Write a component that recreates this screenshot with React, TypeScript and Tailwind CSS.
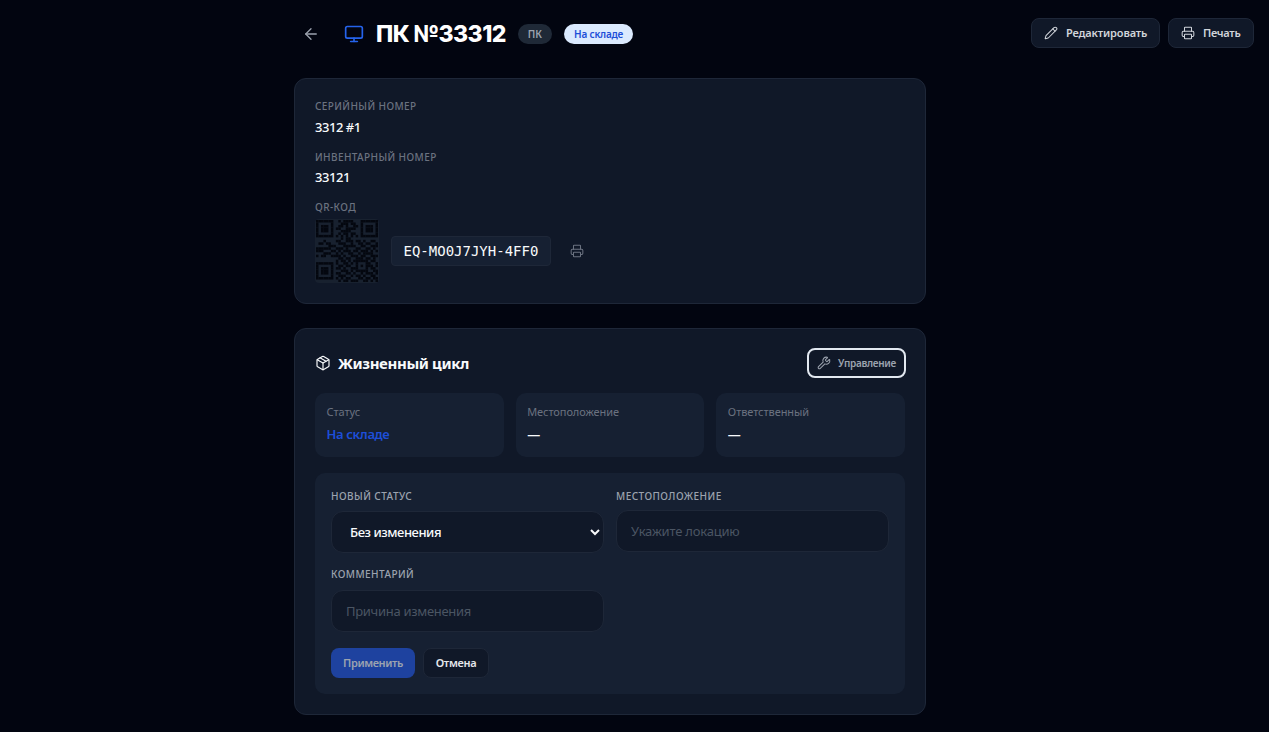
import { ArrowLeft, Monitor, Pencil, Printer, Package, Wrench } from "lucide-react";

const sans = "font-['Noto_Sans',sans-serif]";

const qrRows = [
  "1111111001011110001111111",
  "1000001000111011001000001",
  "1011101001101001101011101",
  "1011101011001111001011101",
  "1011101000111100001011101",
  "1000001001011011001000001",
  "1111111010101010101111111",
  "0000000000101100000000000",
  "0001000011001110110100110",
  "0110110001110010011011001",
  "0000011100011111001100111",
  "1111110011101000110011010",
  "1110001101011101101110101",
  "0001110010100110010111100",
  "1011001111010011101100111",
  "0000000001101100111011010",
  "0000000010110101111110110",
  "1111111010011010100011001",
  "1000001001101100101011101",
  "1011101011010011100010110",
  "1011101000111010111110011",
  "1011101011001101001011101",
  "1000001001110010110100110",
  "1111111010101100011011011",
  "0000000001011011100110101",
];

function QrCode() {
  return (
    <div className="w-[64px] h-[64px] rounded-[4px] bg-[#18212f] flex items-center justify-center shrink-0">
      <svg width="62" height="62" viewBox="0 0 25 25">
        {qrRows.map((row, y) =>
          row.split("").map((c, x) =>
            c === "1" ? <rect key={`${x}-${y}`} x={x} y={y} width="1" height="1" fill="#04070f" /> : null
          )
        )}
      </svg>
    </div>
  );
}

function Field({ label, value }: { label: string; value: string }) {
  return (
    <div className="h-[50.5px]">
      <div className="text-[10px] leading-[14px] font-medium tracking-[0.4px] uppercase text-[#6b7280]">{label}</div>
      <div className="mt-[4.5px] text-[13px] leading-[18px] font-medium tracking-[-0.45px] text-[#f8fafc]">{value}</div>
    </div>
  );
}

function InfoTile({ label, value, accent }: { label: string; value: string; accent?: boolean }) {
  return (
    <div className="h-[64px] rounded-[10px] bg-[#162032] px-[11.5px] pt-[11px]">
      <div className="text-[11px] leading-[15px] tracking-[-0.07px] text-[#6b7280]">{label}</div>
      <div className={`mt-[6px] text-[13px] leading-[18px] font-semibold tracking-[-0.35px] ${accent ? "text-[#1d4ed8]" : "text-[#f8fafc]"}`}>{value}</div>
    </div>
  );
}

function FieldLabel({ children }: { children: string }) {
  return <div className="text-[10px] leading-[14px] font-medium tracking-[0.45px] uppercase text-[#9ca3af]">{children}</div>;
}

export default function App() {
  return (
    <div className={`${sans} min-h-[732px] bg-[#020510] text-white px-[15px] pt-[18px] pb-[17px]`}>
      {/* шапка */}
      <div className="flex items-start justify-between">
        <div className="flex items-center ml-[279px] h-[32px]">
          <button className="w-[34px] flex justify-center text-[#9ca3af]">
            <ArrowLeft size={18} strokeWidth={1.75} />
          </button>
          <Monitor size={20} strokeWidth={2} className="ml-[16px] text-[#2563eb]" />
          <h1 className="ml-[12px] text-[23px] leading-[32px] font-extrabold tracking-[-0.55px] font-['Inter',sans-serif]">ПК №33312</h1>
          <span className="ml-[12px] h-[20px] rounded-full bg-[#1f2937] px-[10px] text-[10px] leading-[20px] font-semibold text-[#9ca3af]">ПК</span>
          <span className="ml-[12px] h-[20px] rounded-full bg-[#dbeafe] px-[10px] text-[10px] leading-[20px] font-semibold tracking-[-0.2px] text-[#1d4ed8]">На складе</span>
        </div>
        <div className="flex gap-[8px]">
          <button className="h-[30px] w-[129px] rounded-[8px] border border-[#1e2738] bg-[#101828] pl-[12px] flex items-center gap-[8px] text-[11px] font-semibold tracking-[-0.15px] text-[#d1d5db]">
            <Pencil size={14} strokeWidth={1.75} />
            Редактировать
          </button>
          <button className="h-[30px] w-[86px] rounded-[8px] border border-[#1e2738] bg-[#101828] pl-[12px] flex items-center gap-[8px] text-[11px] font-semibold tracking-[-0.3px] text-[#d1d5db]">
            <Printer size={14} strokeWidth={1.75} />
            Печать
          </button>
        </div>
      </div>

      <div className="ml-[279px] w-[632px] mt-[28px] flex flex-col gap-[24px]">
        {/* идентификаторы */}
        <section className="h-[226px] rounded-[12px] border border-[#1e2738] bg-[#101828] px-[20px] pt-[20px]">
          <Field label="Серийный номер" value="3312 #1" />
          <Field label="Инвентарный номер" value="33121" />
          <div className="text-[10px] leading-[14px] font-medium tracking-[0.4px] uppercase text-[#6b7280]">QR-код</div>
          <div className="mt-[5px] flex items-center">
            <QrCode />
            <span className="ml-[12px] h-[30px] rounded-[4px] border border-[#1e2738] bg-[#162032] px-[11.5px] font-['DejaVu_Sans_Mono',monospace] text-[14px] leading-[28px] text-[#f8fafc]">EQ-MO0J7JYH-4FF0</span>
            <Printer size={14} strokeWidth={1.75} className="ml-[19px] text-[#6b7280]" />
          </div>
        </section>

        {/* жизненный цикл */}
        <section className="rounded-[12px] border border-[#1e2738] bg-[#101828] px-[20px] pt-[19px] pb-[20px]">
          <div className="flex items-center justify-between h-[30px]">
            <div className="flex items-center gap-[7px]">
              <Package size={16} strokeWidth={1.75} className="text-[#f8fafc]" />
              <h2 className="text-[15px] leading-[20px] font-bold tracking-[-0.38px] text-[#f8fafc]">Жизненный цикл</h2>
            </div>
            <button className="h-[30px] w-[99px] -mr-[1px] rounded-[8px] border-2 border-[#e2e8f0] bg-[#101828] pl-[8px] flex items-center gap-[7px] text-[10px] font-semibold tracking-[-0.3px] text-[#9ca3af]">
              <Wrench size={14} strokeWidth={1.75} />
              Управление
            </button>
          </div>

          <div className="mt-[15px] grid grid-cols-3 gap-[12px]">
            <InfoTile label="Статус" value="На складе" accent />
            <InfoTile label="Местоположение" value="—" />
            <InfoTile label="Ответственный" value="—" />
          </div>

          <div className="mt-[16px] rounded-[10px] bg-[#162032] px-[16px] pt-[16px] pb-[16px]">
            <div className="grid grid-cols-2 gap-x-[12px]">
              <div>
                <FieldLabel>Новый статус</FieldLabel>
                <select className="mt-[8px] w-full h-[42px] rounded-[12px] border border-[#1e2738] bg-[#101828] pl-[14px] pr-[0px] text-[13px] font-medium tracking-[-0.45px] text-[#f8fafc]">
                  <option>Без изменения</option>
                </select>
              </div>
              <div>
                <FieldLabel>Местоположение</FieldLabel>
                <input placeholder="Укажите локацию" className="mt-[7px] w-full h-[42px] rounded-[12px] border border-[#1e2738] bg-[#101828] px-[14px] text-[13px] tracking-[-0.2px] placeholder:text-[#4b5563]" />
              </div>
              <div className="mt-[14px]">
                <FieldLabel>Комментарий</FieldLabel>
                <input placeholder="Причина изменения" className="mt-[9px] w-full h-[42px] rounded-[12px] border border-[#1e2738] bg-[#101828] px-[14px] text-[13px] tracking-[-0.3px] placeholder:text-[#4b5563]" />
              </div>
            </div>
            <div className="mt-[16px] flex items-center gap-[8px]">
              <button className="h-[30px] w-[84px] rounded-[8px] bg-[#1e429f] text-[11px] font-semibold tracking-[-0.4px] text-[#9ca3af]">Применить</button>
              <button className="h-[30px] w-[66px] rounded-[8px] border border-[#1e2738] bg-[#101828] text-[11px] font-semibold tracking-[-0.3px] text-[#e5e7eb]">Отмена</button>
            </div>
          </div>
        </section>
      </div>
    </div>
  );
}
